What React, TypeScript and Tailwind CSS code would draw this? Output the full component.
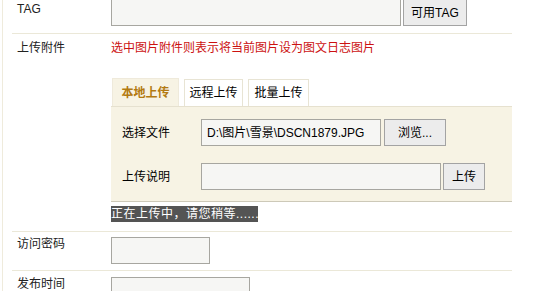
import React from "react";

const font = { fontFamily: '"Liberation Sans", "Noto Sans CJK SC", sans-serif' };

function Input({ w, value }: { w: string; value?: string }) {
  return (
    <div
      className={`${w} h-[27px] box-border border border-[#a7a6a0] bg-[#f6f6f4] flex items-center pl-[5px] text-[12px] text-black whitespace-nowrap overflow-hidden`}
    >
      {value}
    </div>
  );
}

function Btn({ w, children }: { w: string; children: React.ReactNode }) {
  return (
    <div
      className={`${w} h-[27px] box-border border border-[#a3a3a3] bg-[#ececec] flex items-center justify-center text-[12px] text-black whitespace-nowrap`}
    >
      {children}
    </div>
  );
}

export default function App() {
  return (
    <div className="w-[539px] h-[291px] overflow-hidden bg-white relative text-[12px] leading-[18px] text-[#222]" style={font}>
      <div className="absolute left-[2px] top-0 bottom-0 w-px bg-[#efebdc]" />
      <div className="ml-[12px] w-[500px]">
        {/* TAG row */}
        <div className="flex h-[34px] border-b border-[#ebe8d8]">
          <div className="w-[99px] pl-[5px]">TAG</div>
          <div className="flex gap-[2px] -mt-[1px]">
            <Input w="w-[290px]" />
            <Btn w="w-[64px]">可用TAG</Btn>
          </div>
        </div>

        {/* upload row */}
        <div className="flex border-b border-[#ebe8d8] pb-[9px]">
          <div className="w-[99px] pl-[5px] pt-[5px]">上传附件</div>
          <div className="flex flex-col">
            <div className="pt-[5px] text-[#cc1111]">选中图片附件则表示将当前图片设为图文日志图片</div>
            <div className="flex mt-[21px] pl-[1px] gap-[5px] items-end">
              <div className="w-[67px] h-[28px] bg-[#f7f3e4] border border-b-0 border-[#efeadb] flex items-center justify-center font-bold text-[#b37a10]">本地上传</div>
              <div className="w-[59px] h-[27px] bg-white border border-b-0 border-[#e8e4d4] flex items-center justify-center text-black">远程上传</div>
              <div className="w-[61px] h-[27px] bg-white border border-b-0 border-[#e8e4d4] flex items-center justify-center text-black">批量上传</div>
            </div>
            <div className="w-[401px] bg-[#f7f3e4] border-t border-[#e6e1cf] border-b border-b-[#cdc9b8] pt-[12px] pb-[11px] pl-[11px] flex flex-col gap-[17px]">
              <div className="flex items-center">
                <div className="w-[79px] text-black">选择文件</div>
                <Input w="w-[180px]" value="D:\图片\雪景\DSCN1879.JPG" />
                <div className="ml-[3px]">
                  <Btn w="w-[62px]">浏览...</Btn>
                </div>
              </div>
              <div className="flex items-center">
                <div className="w-[79px] text-black">上传说明</div>
                <Input w="w-[240px]" />
                <div className="ml-[2px]">
                  <Btn w="w-[42px]">上传</Btn>
                </div>
              </div>
            </div>
            <div className="mt-[4px] w-[147px] h-[16px] bg-[#545454] text-white leading-[16px] whitespace-nowrap tracking-[0.5px]">正在上传中，请您稍等......</div>
          </div>
        </div>

        {/* password row */}
        <div className="flex border-b border-[#ebe8d8] h-[39px]">
          <div className="w-[99px] pl-[5px] pt-[3px]">访问密码</div>
          <div className="pt-[5px]">
            <Input w="w-[99px]" />
          </div>
        </div>

        {/* time row */}
        <div className="flex h-[40px]">
          <div className="w-[99px] pl-[5px] pt-[4px]">发布时间</div>
          <div className="pt-[6px]">
            <Input w="w-[139px]" />
          </div>
        </div>
      </div>
    </div>
  );
}
